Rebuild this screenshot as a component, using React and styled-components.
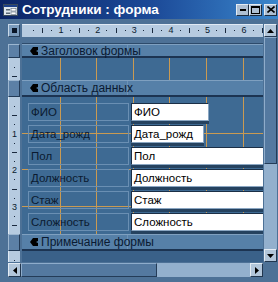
import React from 'react';
import styled, { createGlobalStyle } from 'styled-components';

const GlobalStyle = createGlobalStyle`
    html, body {
        margin: 0;
        padding: 0;
        background: #4d7196;
    }
    body {
        font-family: "Liberation Sans", Arial, sans-serif;
    }
`

const CM = 36.6;

const Window = styled.div`
    width: 278px;
    height: 282px;
    background: #4d7196;
    display: flex;
    flex-direction: column;
    overflow: hidden;
`

const TitleBar = styled.div`
    height: 19px;
    display: flex;
    align-items: center;
    padding: 0 1px 0 3px;
    background: linear-gradient(to right, #0b2466 0%, #1c4a98 55%, #3a86cc 100%);
`

const TitleText = styled.span`
    color: #fff;
    font-weight: 700;
    font-size: 13.5px;
    margin-left: 4px;
    flex: 1;
    white-space: nowrap;
`

const CaptionButton = styled.div`
    width: 13px;
    height: 12px;
    margin-left: ${p => p.gap || 0}px;
    background: #aebfd2;
    border: 1px solid;
    border-color: #e4ecf4 #1d2c3e #1d2c3e #e4ecf4;
    box-sizing: border-box;
    display: flex;
    align-items: center;
    justify-content: center;
`

const Body = styled.div`
    display: flex;
    padding: 5px 0 0 8px;
    height: 238px;
`

const Column = styled.div`
    display: flex;
    flex-direction: column;
    width: ${p => p.w}px;
    margin-right: ${p => p.mr || 0}px;
    flex: none;
`

const CornerBox = styled.div`
    height: 13px;
    background: #7c9cbd;
    border: 1px solid;
    border-color: #c8d8e8 #2a425e #2a425e #c8d8e8;
    box-sizing: border-box;
    display: flex;
    align-items: center;
    justify-content: center;
    &::after {
        content: '';
        width: 5px;
        height: 5px;
        background: #0a1628;
    }
`

const Spacer = styled.div`
    height: ${p => p.h}px;
    background: ${p => p.bg || 'transparent'};
    border-bottom: ${p => (p.line ? '1px solid #2d4b6b' : 'none')};
    box-sizing: border-box;
`

const HRuler = styled.div`
    height: 13px;
    background: #b6cbe0;
    border-top: 1px solid #e0eaf4;
    box-sizing: border-box;
    position: relative;
    overflow: hidden;
`

const Tick = styled.span`
    position: absolute;
    left: ${p => p.x}px;
    top: ${p => p.y}px;
    width: ${p => p.w}px;
    height: ${p => p.h}px;
    background: #1a2a3e;
`

const RulerNum = styled.span`
    position: absolute;
    left: ${p => p.x - 3}px;
    top: ${p => p.y}px;
    width: 7px;
    text-align: center;
    font-size: 9px;
    line-height: 11px;
    color: #0a1a2e;
`

const VRulerPart = styled.div`
    height: ${p => p.h}px;
    background: #b6cbe0;
    position: relative;
    overflow: hidden;
    border-left: 1px solid #e0eaf4;
    box-sizing: border-box;
`

const Selector = styled.div`
    height: ${p => p.h}px;
    background: #5c80a6;
    border: 1px solid;
    border-color: #9cb6d0 #223a56 #223a56 #9cb6d0;
    box-sizing: border-box;
`

const SectionHeader = styled.div`
    height: ${p => p.h}px;
    background: #5680a8;
    border-top: 1px solid #7fa0c0;
    border-bottom: 2px solid #1c3452;
    box-sizing: border-box;
    display: flex;
    align-items: center;
    padding-left: 3px;
`

const HeaderLabel = styled.div`
    display: flex;
    align-items: center;
    height: 100%;
    width: 103px;
    border: 1px solid #6d92b6;
    border-width: 0 1px 0 0;
    padding-left: 5px;
    box-sizing: border-box;
    font-size: 12px;
    color: #0a1a32;
    white-space: nowrap;
    svg {
        margin-right: 3px;
        flex: none;
    }
`

const GridArea = styled.div`
    height: ${p => p.h}px;
    flex: none;
    background-color: #3e6a93;
    background-image:
        repeating-linear-gradient(to right, transparent 0, transparent ${CM - 1}px, #c99a52 ${CM - 1}px, #c99a52 ${CM}px),
        repeating-linear-gradient(to bottom, transparent 0, transparent ${CM - 1}px, #c99a52 ${CM - 1}px, #c99a52 ${CM}px);
    background-position: 2px 0, 0 0;
    background-size: 100% 100%, 100% ${p => (p.rows ? '100%' : '0')};
    background-repeat: no-repeat;
    box-sizing: border-box;
    padding-top: ${p => p.pt || 0}px;
    display: flex;
    flex-direction: column;
    gap: 4px;
    overflow: hidden;
`

const Row = styled.div`
    display: flex;
    height: 18px;
    padding-left: 6px;
    flex: none;
`

const Label = styled.div`
    width: 101px;
    flex: none;
    height: 18px;
    border: 1px solid #6a8fb3;
    box-sizing: border-box;
    padding-left: 2px;
    font-size: 11.5px;
    line-height: 16px;
    color: #0b1a30;
    margin-right: 2px;
`

const Field = styled.div`
    width: ${p => p.w}px;
    flex: none;
    height: 18px;
    background: #fff;
    border: 1px solid;
    border-color: #1b2f46 #8aa6c2 #8aa6c2 #1b2f46;
    box-shadow: 0 3px 0 #25425f;
    box-sizing: border-box;
    padding-left: 2px;
    font-size: 11.5px;
    line-height: 16px;
    color: #000;
    white-space: nowrap;
`

const ScrollBar = styled.div`
    display: flex;
    flex: none;
    flex-direction: ${p => (p.vertical ? 'column' : 'row')};
    ${p => (p.vertical ? 'height: 238px; width: 13px;' : 'height: 14px; width: 255px;')}
`

const ArrowButton = styled.div`
    ${p => (p.vertical ? 'height: 13px; width: 13px;' : 'width: 13px; height: 14px;')}
    flex: none;
    background: #b2c6da;
    border: 1px solid;
    border-color: #e4ecf4 #22374f #22374f #e4ecf4;
    box-sizing: border-box;
    display: flex;
    align-items: center;
    justify-content: center;
`

const Thumb = styled.div`
    ${p => (p.vertical ? `height: ${p.size}px;` : `width: ${p.size}px;`)}
    flex: none;
    background: #5479a0;
    border: 1px solid;
    border-color: #8eaccb #243c58 #243c58 #8eaccb;
    box-sizing: border-box;
`

const Track = styled.div`
    flex: 1;
    background: #93b0cd;
`

const BottomRow = styled.div`
    display: flex;
    padding-left: 8px;
    margin-top: 1px;
`

const Triangle = ({ dir }) => {
    const pts = {
        up: '0,4 3.5,0 7,4',
        down: '0,0 3.5,4 7,0',
        left: '4,0 0,3.5 4,7',
        right: '0,0 4,3.5 0,7',
    }[dir];
    const vert = dir === 'up' || dir === 'down';
    return (
        <svg width={vert ? 7 : 4} height={vert ? 4 : 7}>
            <polygon points={pts} fill="#000" />
        </svg>
    );
};

const Pointer = () => (
    <svg width="8" height="8" viewBox="0 0 8 8">
        <polygon points="0,4 3,0 8,0 8,3 6,4 8,5 8,8 3,8" fill="#000" />
    </svg>
);

const FormIcon = () => (
    <svg width="15" height="12" viewBox="0 0 15 12">
        <rect x="0.5" y="0.5" width="14" height="11" fill="#dfe6ee" stroke="#3a4a5c" />
        <rect x="1" y="1" width="13" height="2" fill="#1b3f8a" />
        <rect x="3" y="5" width="4" height="1.5" fill="#5a6878" />
        <rect x="8" y="4.5" width="5" height="2.5" fill="#fff" stroke="#5a6878" strokeWidth="0.6" />
        <rect x="3" y="8.5" width="4" height="1.5" fill="#5a6878" />
        <rect x="8" y="8" width="5" height="2.5" fill="#fff" stroke="#5a6878" strokeWidth="0.6" />
    </svg>
);

const HorizontalRuler = () => {
    const marks = [];
    for (let i = 0; i < 7; i++) {
        const base = 2 + i * CM;
        if (i > 0) marks.push(<RulerNum key={'n' + i} x={base} y={0}>{i}</RulerNum>);
        marks.push(<Tick key={'a' + i} x={base + CM * 0.25} y={5} w={1} h={1} />);
        marks.push(<Tick key={'b' + i} x={base + CM * 0.5} y={3} w={1} h={5} />);
        marks.push(<Tick key={'c' + i} x={base + CM * 0.75} y={5} w={1} h={1} />);
    }
    return <HRuler>{marks}</HRuler>;
};

const VerticalRuler = ({ h, numbered }) => {
    const marks = [];
    for (let i = 0; i * CM < h; i++) {
        const base = i * CM;
        if (numbered && i > 0) {
            marks.push(<RulerNum key={'n' + i} x={5} y={base - 5}>{i}</RulerNum>);
        }
        marks.push(<Tick key={'a' + i} x={5} y={base + CM * 0.25} w={1} h={1} />);
        marks.push(<Tick key={'b' + i} x={3} y={base + CM * 0.5} w={5} h={1} />);
        marks.push(<Tick key={'c' + i} x={5} y={base + CM * 0.75} w={1} h={1} />);
    }
    return <VRulerPart h={h}>{marks}</VRulerPart>;
};

const fields = [
    { label: 'ФИО', w: 78 },
    { label: 'Дата_рожд', w: 73 },
    { label: 'Пол', w: 140 },
    { label: 'Должность', w: 140 },
    { label: 'Стаж', w: 140 },
    { label: 'Сложность', w: 140 },
];

export default function App() {
    return (
        <>
            <GlobalStyle />
            <Window>
                <TitleBar>
                    <FormIcon />
                    <TitleText>Сотрудники : форма</TitleText>
                    <CaptionButton>
                        <svg width="6" height="2"><rect width="6" height="2" fill="#000" /></svg>
                    </CaptionButton>
                    <CaptionButton>
                        <svg width="9" height="8"><rect x="0.5" y="0.5" width="8" height="7" fill="none" stroke="#000" /><rect x="0" y="0" width="9" height="2" fill="#000" /></svg>
                    </CaptionButton>
                    <CaptionButton gap={2}>
                        <svg width="8" height="7"><path d="M0.5 0.5 L7.5 6.5 M7.5 0.5 L0.5 6.5" stroke="#000" strokeWidth="1.6" /></svg>
                    </CaptionButton>
                </TitleBar>
                <Body>
                    <Column w={12} mr={2}>
                        <CornerBox />
                        <Spacer h={7} />
                        <Selector h={14} />
                        <VerticalRuler h={22} />
                        <Selector h={17} />
                        <VerticalRuler h={137} numbered />
                        <Selector h={17} />
                        <VerticalRuler h={11} />
                    </Column>
                    <Column w={241} mr={1}>
                        <HorizontalRuler />
                        <Spacer h={7} line />
                        <SectionHeader h={14}>
                            <HeaderLabel><Pointer />Заголовок формы</HeaderLabel>
                        </SectionHeader>
                        <GridArea h={22} />
                        <SectionHeader h={17}>
                            <HeaderLabel><Pointer />Область данных</HeaderLabel>
                        </SectionHeader>
                        <GridArea h={137} pt={6} rows>
                            {fields.map(f => (
                                <Row key={f.label}>
                                    <Label>{f.label}</Label>
                                    <Field w={f.w}>{f.label}</Field>
                                </Row>
                            ))}
                        </GridArea>
                        <SectionHeader h={17}>
                            <HeaderLabel><Pointer />Примечание формы</HeaderLabel>
                        </SectionHeader>
                        <Spacer h={11} bg="#3a6189" />
                    </Column>
                    <ScrollBar vertical>
                        <ArrowButton vertical><Triangle dir="up" /></ArrowButton>
                        <Thumb vertical size={127} />
                        <Track />
                        <ArrowButton vertical><Triangle dir="down" /></ArrowButton>
                    </ScrollBar>
                </Body>
                <BottomRow>
                    <ScrollBar>
                        <ArrowButton><Triangle dir="left" /></ArrowButton>
                        <Thumb size={136} />
                        <Track />
                        <ArrowButton><Triangle dir="right" /></ArrowButton>
                    </ScrollBar>
                </BottomRow>
            </Window>
        </>
    );
}
